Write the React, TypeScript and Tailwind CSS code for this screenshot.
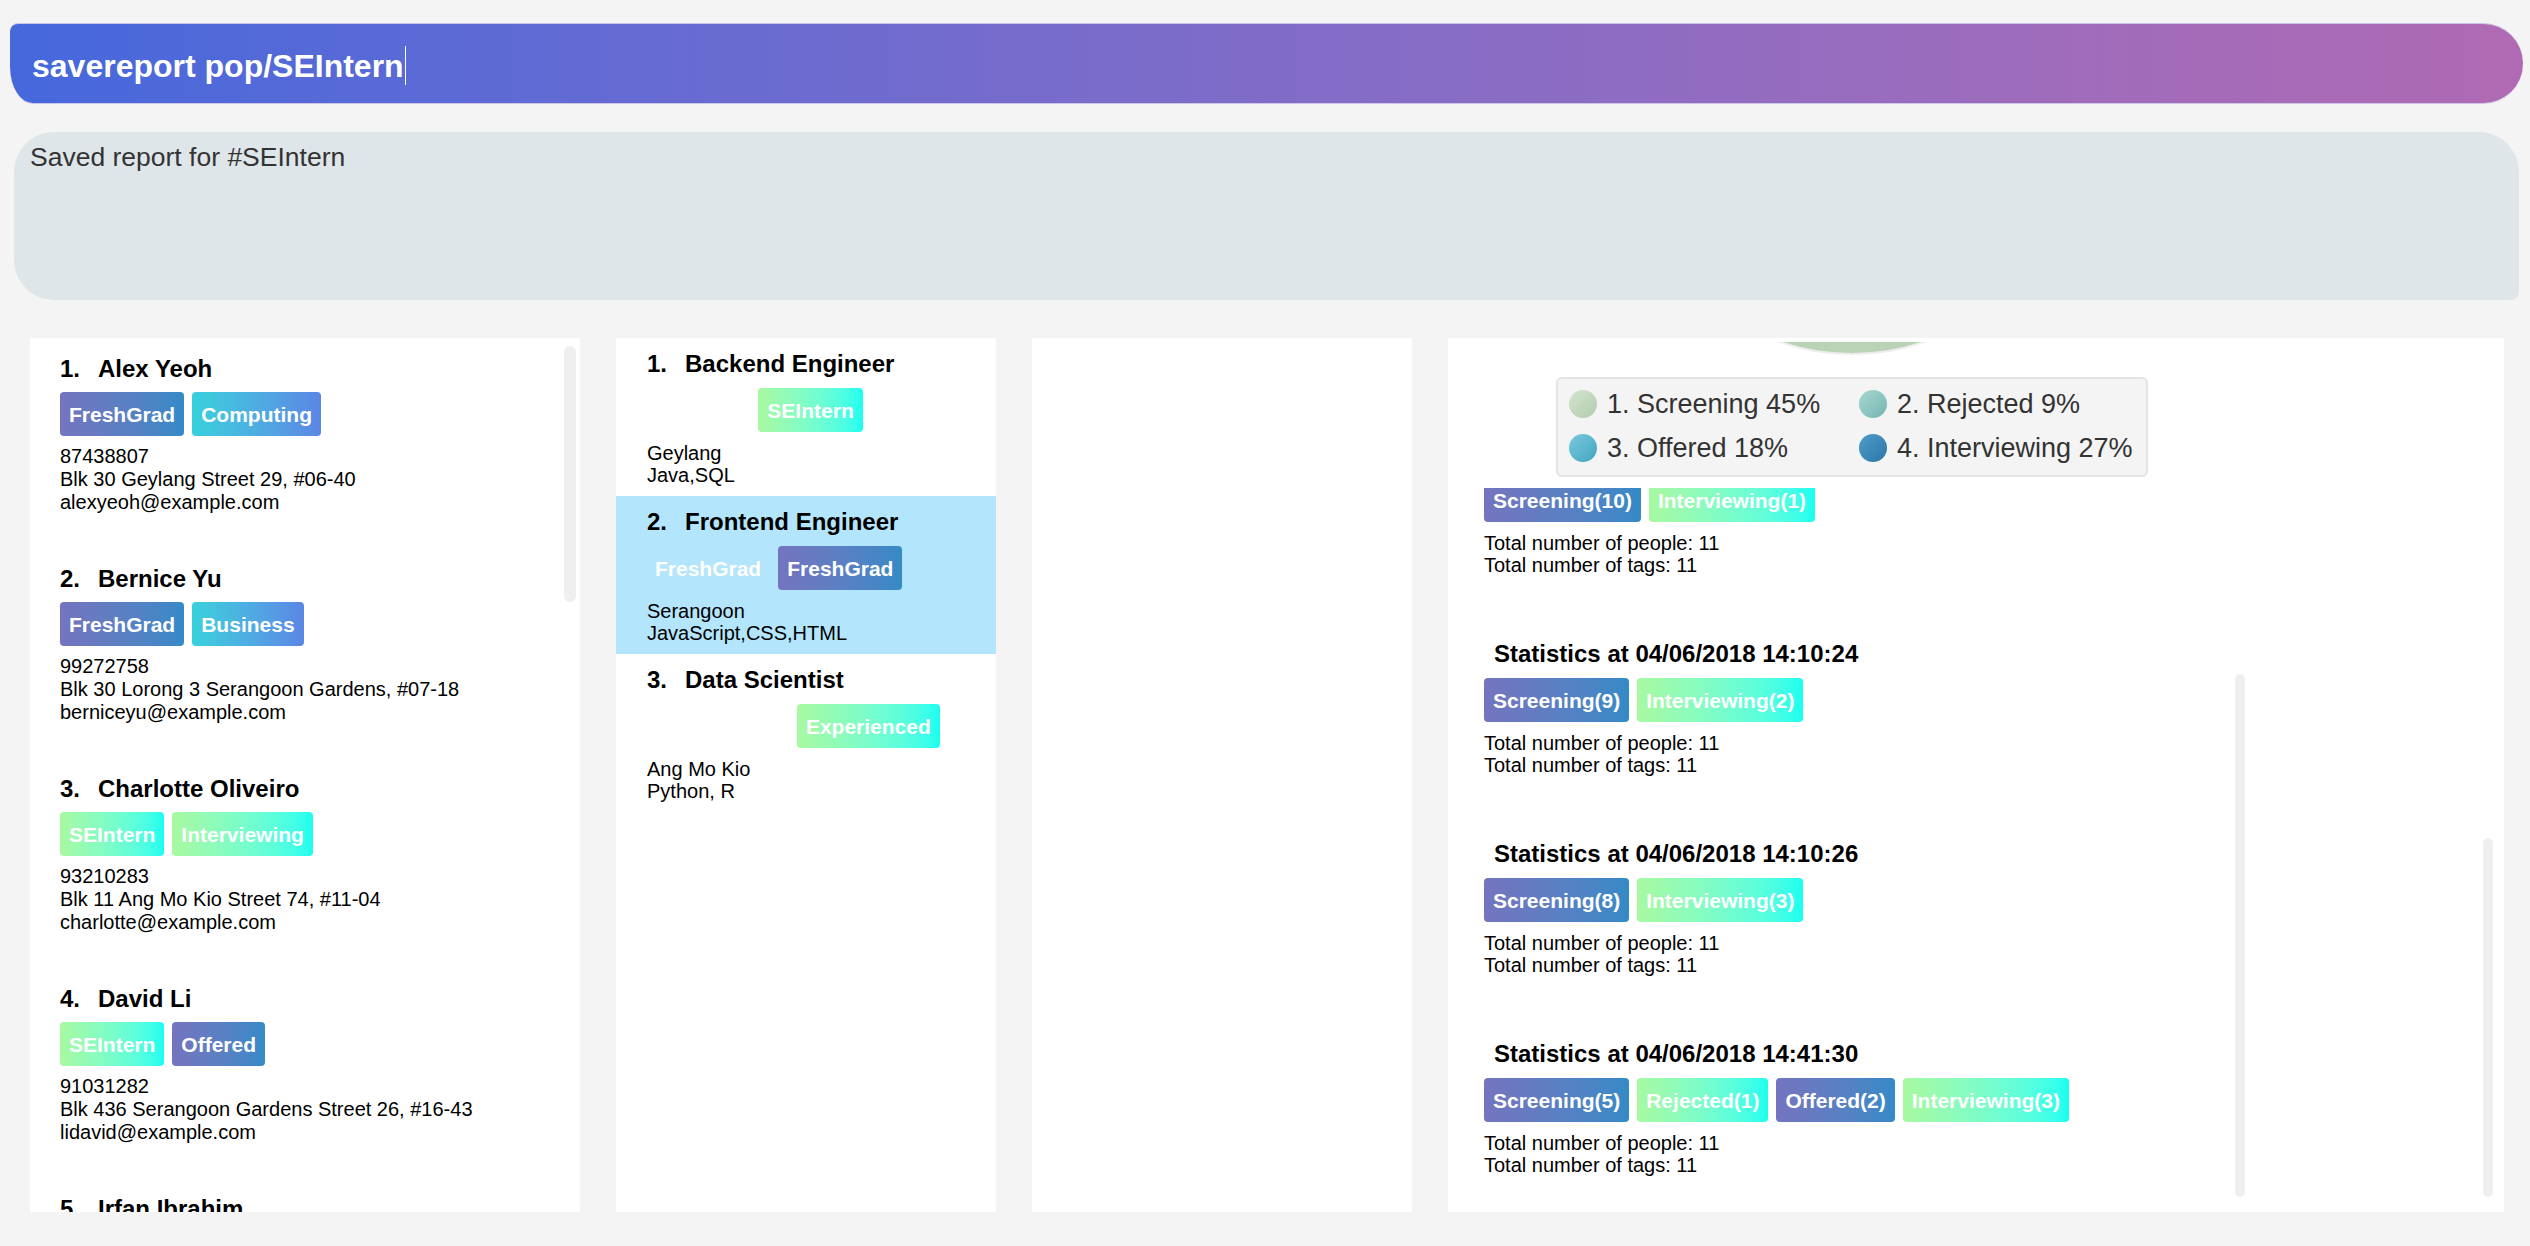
import React from 'react';

const tones = {
  violet: 'bg-linear-to-r from-[#7474bf] to-[#348ac7]',
  sky: 'bg-linear-to-r from-[#36d1dc] to-[#5b86e5]',
  mint: 'bg-linear-to-r from-[#a8f9a0] to-[#16fff0]',
  none: '',
};

type Tone = keyof typeof tones;

const people = [
  {
    name: 'Alex Yeoh',
    tags: [['FreshGrad', 'violet'], ['Computing', 'sky']],
    phone: '87438807',
    address: 'Blk 30 Geylang Street 29, #06-40',
    email: 'alexyeoh@example.com',
  },
  {
    name: 'Bernice Yu',
    tags: [['FreshGrad', 'violet'], ['Business', 'sky']],
    phone: '99272758',
    address: 'Blk 30 Lorong 3 Serangoon Gardens, #07-18',
    email: 'berniceyu@example.com',
  },
  {
    name: 'Charlotte Oliveiro',
    tags: [['SEIntern', 'mint'], ['Interviewing', 'mint']],
    phone: '93210283',
    address: 'Blk 11 Ang Mo Kio Street 74, #11-04',
    email: 'charlotte@example.com',
  },
  {
    name: 'David Li',
    tags: [['SEIntern', 'mint'], ['Offered', 'violet']],
    phone: '91031282',
    address: 'Blk 436 Serangoon Gardens Street 26, #16-43',
    email: 'lidavid@example.com',
  },
  {
    name: 'Irfan Ibrahim',
    tags: [['Experienced', 'mint'], ['Screening', 'violet']],
    phone: '92492021',
    address: 'Blk 47 Tampines Street 20, #17-35',
    email: 'irfan@example.com',
  },
] as { name: string; tags: [string, Tone][]; phone: string; address: string; email: string }[];

const jobs = [
  { title: 'Backend Engineer', tag: ['SEIntern', 'mint'], place: 'Geylang', skills: 'Java,SQL', selected: false },
  { title: 'Frontend Engineer', tag: ['FreshGrad', 'violet'], place: 'Serangoon', skills: 'JavaScript,CSS,HTML', selected: true },
  { title: 'Data Scientist', tag: ['Experienced', 'mint'], place: 'Ang Mo Kio', skills: 'Python, R', selected: false },
] as { title: string; tag: [string, Tone]; place: string; skills: string; selected: boolean }[];

const stats = [
  { at: '04/06/2018 14:10:24', tags: [['Screening(9)', 'violet'], ['Interviewing(2)', 'mint']] },
  { at: '04/06/2018 14:10:26', tags: [['Screening(8)', 'violet'], ['Interviewing(3)', 'mint']] },
  {
    at: '04/06/2018 14:41:30',
    tags: [['Screening(5)', 'violet'], ['Rejected(1)', 'mint'], ['Offered(2)', 'violet'], ['Interviewing(3)', 'mint']],
  },
] as { at: string; tags: [string, Tone][] }[];

const legend = [
  { label: '1. Screening 45%', dot: 'from-[#d3e6cf] to-[#b2cbad]' },
  { label: '2. Rejected 9%', dot: 'from-[#a6d6d2] to-[#76b6b1]' },
  { label: '3. Offered 18%', dot: 'from-[#78cade] to-[#42a5bf]' },
  { label: '4. Interviewing 27%', dot: 'from-[#4f9dca] to-[#2a76a6]' },
];

const Tag = ({ label, tone }: { label: string; tone: Tone }) => (
  <span
    className={`h-[44px] px-[9px] rounded-[4px] flex items-center text-[21px] font-bold text-white leading-none whitespace-nowrap ${tones[tone]}`}
  >
    {label}
  </span>
);

const Totals = () => (
  <div className="mt-[10px] text-[20px] leading-[22px] text-black">
    <div>Total number of people: 11</div>
    <div>Total number of tags: 11</div>
  </div>
);

export default function App() {
  return (
    <div
      className="w-[2530px] h-[1246px] bg-[#f4f4f4] overflow-hidden pt-[23px]"
      style={{ fontFamily: '"Liberation Sans", Arial, sans-serif' }}
    >
      {/* command box */}
      <div className="ml-[10px] mr-[7px] h-[81px] flex items-center pl-[22px] pt-[4px] bg-linear-to-r from-[#4568dc] to-[#b06ab3] border-y border-[#cdc6e8] rounded-tl-[8px] rounded-bl-[23px_37px] rounded-r-[40px]">
        <span className="text-[32px] font-bold text-white leading-[40px]">savereport pop/SEIntern</span>
        <span className="w-px h-[39px] bg-white ml-[1px]" />
      </div>

      {/* result display */}
      <div className="ml-[14px] mr-[11px] mt-[28px] h-[168px] bg-[#dfe6e9] rounded-tl-[40px] rounded-bl-[40px] rounded-tr-[40px] rounded-br-[8px] pl-[16px] pt-[10px]">
        <div className="text-[26.5px] leading-[30px] text-[#333]">Saved report for #SEIntern</div>
      </div>

      <div className="flex gap-[36px] pl-[30px] mt-[38px] h-[874px]">
        {/* persons */}
        <div className="relative w-[550px] bg-white overflow-hidden">
          {people.map((p, i) => (
            <div key={p.name} className="pl-[30px] pt-[17px] pb-[34px]">
              <div className="flex text-[24px] font-bold leading-[28px] text-black">
                <span className="w-[38px]">{i + 1}.</span>
                <span>{p.name}</span>
              </div>
              <div className="flex gap-[8px] mt-[9px]">
                {p.tags.map(([l, t]) => (
                  <Tag key={l} label={l} tone={t} />
                ))}
              </div>
              <div className="mt-[9px] text-[20px] leading-[23px] text-black">
                <div>{p.phone}</div>
                <div>{p.address}</div>
                <div>{p.email}</div>
              </div>
            </div>
          ))}
          <div className="absolute left-[534px] top-[8px] w-[12px] h-[256px] rounded-full bg-[#efefef]" />
        </div>

        {/* jobs */}
        <div className="w-[380px] bg-white overflow-hidden">
          {jobs.map((j, i) => (
            <div key={j.title} className={`pl-[30px] pt-[12px] pb-[10px] h-[158px] ${j.selected ? 'bg-[#b3e5fc]' : ''}`}>
              <div className="flex text-[24px] font-bold leading-[28px] text-black pl-px">
                <span className="w-[38px]">{i + 1}.</span>
                <span>{j.title}</span>
              </div>
              <div className="flex gap-[8px] mt-[10px]">
                <Tag label={j.tag[0]} tone="none" />
                <Tag label={j.tag[0]} tone={j.tag[1]} />
              </div>
              <div className="mt-[10px] text-[20px] leading-[22px] text-black pl-px">
                <div>{j.place}</div>
                <div>{j.skills}</div>
              </div>
            </div>
          ))}
        </div>

        {/* empty */}
        <div className="w-[380px] bg-white" />

        {/* statistics */}
        <div className="relative w-[1056px] bg-white overflow-hidden">
          <div className="ml-[108px] w-[592px]">
            <svg width="592" height="16" className="mt-[4px] block">
              <circle cx="296" cy="-208" r="220" fill="#bad3b6" stroke="#ececec" strokeWidth="2" />
            </svg>
            <div className="mt-[19px] h-[100px] border-2 border-[#e3e3e3] bg-[#f4f4f4] rounded-[6px] pl-[11px] pt-[11px] grid grid-cols-[290px_auto] content-start gap-y-[16px]">
              {legend.map((l) => (
                <div key={l.label} className="flex items-center gap-[10px] h-[28px]">
                  <span className={`w-[28px] h-[28px] rounded-full bg-linear-to-br ${l.dot}`} />
                  <span className="text-[27px] leading-[28px] text-[#333]">{l.label}</span>
                </div>
              ))}
            </div>
          </div>

          <div className="pl-[36px] mt-[11px]">
            <div className="h-[34px] overflow-hidden flex items-end gap-[8px]">
              <Tag label="Screening(10)" tone="violet" />
              <Tag label="Interviewing(1)" tone="mint" />
            </div>
            <Totals />

            {stats.map((s) => (
              <div key={s.at} className="mt-[64px]">
                <div className="pl-[10px] text-[24px] font-bold leading-[28px] text-black">Statistics at {s.at}</div>
                <div className="flex gap-[8px] mt-[10px]">
                  {s.tags.map(([l, t]) => (
                    <Tag key={l} label={l} tone={t} />
                  ))}
                </div>
                <Totals />
              </div>
            ))}
          </div>

          <div className="absolute left-[787px] top-[336px] w-[10px] h-[523px] rounded-full bg-[#efefef]" />
          <div className="absolute left-[1035px] top-[500px] w-[10px] h-[359px] rounded-full bg-[#efefef]" />
        </div>
      </div>
    </div>
  );
}
